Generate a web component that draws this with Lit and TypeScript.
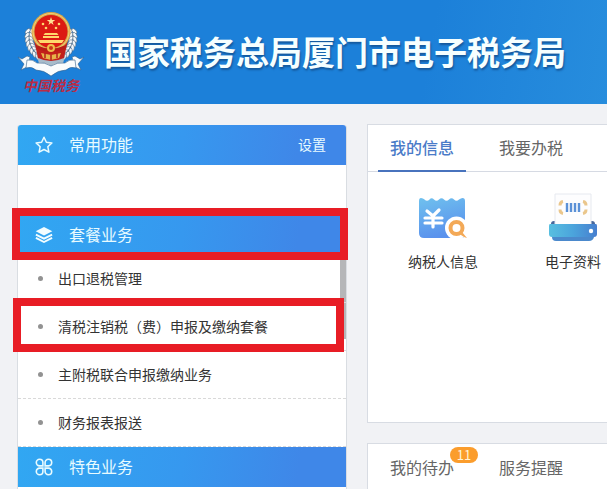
import { LitElement, html, css, svg } from "lit";
import { customElement } from "lit/decorators.js";
import { classMap } from "lit/directives/class-map.js";

const font = css`"Noto Sans CJK SC", "Liberation Sans", sans-serif`;

@customElement("tax-emblem")
class TaxEmblem extends LitElement {
  static styles = css`
    :host { display: flex; flex-direction: column; align-items: center; width: 68px; }
    svg { display: block; width: 68px; height: 67px; }
    .script {
      font: italic bold 14px/16px ${font};
      color: #b92c46;
      white-space: nowrap;
    }
  `;

  private leaves() {
    const out = [];
    for (const side of [-1, 1]) {
      for (let i = 0; i < 9; i++) {
        const t = ((-14 + i * 10) * Math.PI) / 180;
        for (const r of [20, 24]) {
          const x = 34 + side * r * Math.cos(t);
          const y = 27 + r * Math.sin(t);
          const tilt = side * ((t * 180) / Math.PI + (r === 24 ? 62 : 112));
          out.push(svg`<ellipse cx=${x} cy=${y} rx="3.2" ry="1.7" transform="rotate(${tilt} ${x} ${y})" fill="#f4f8fb" stroke="#43586e" stroke-width=".5"/>`);
        }
      }
    }
    return out;
  }

  render() {
    return html`
      <svg viewBox="0 0 68 67" aria-hidden="true">
        ${this.leaves()}
        <path d="M18 39 Q22 50 34 50 Q46 50 50 39 L45 57 L34 62 L23 57Z" fill="#a8bccb"/>
        <path d="M17 30H51L47 48Q34 54 21 48Z" fill="#c3201b"/>
        <circle cx="34" cy="21.500" r="19.500" fill="#d9a648"/>
        <circle cx="34" cy="21.500" r="18" fill="none" stroke="#f3cf78" stroke-width="1"/>
        <circle cx="34" cy="21.500" r="16.500" fill="#dc1a13"/>
        <path d="M34 7l1 3h3.200l-2.600 2 1 3-2.600-1.900-2.600 1.900 1-3-2.600-2h3.200z" fill="#ffe293"/>
        <g fill="#ffd76c">
          <circle cx="26" cy="14" r="1.300"/><circle cx="29" cy="18" r="1.300"/>
          <circle cx="39" cy="18" r="1.300"/><circle cx="42" cy="14" r="1.300"/>
          <path d="M28 23h12l1.500 2h-15zM26 26h16v2h-16zM21 30h26l-2 3h-22z"/>
        </g>
        <path d="M19 35 Q34 42 49 35 L48 39 Q34 45 20 39Z" fill="#b81d18"/>
        <circle cx="34" cy="38" r="4" fill="#eebd4b"/>
        <circle cx="34" cy="38" r="2" fill="#c8371c"/>
        <path d="M24 43 34 45 44 43 42 48 34 50 26 48Z" fill="#e7b54a"/>
        <path d="M28 43v5M34 45v5M40 43v5" stroke="#b52018" stroke-width="1.500"/>
        <path d="M1 47 5 49 10 46 13 47 10 57 4 60 7 54ZM67 47 63 49 58 46 55 47 58 57 64 60 61 54Z" fill="#f8fbfd" stroke="#34608a" stroke-width=".6"/>
        <path d="M10 50 Q16 49 20 53 Q28 52 34 56 Q40 52 48 53 Q52 49 58 50 L59 58 Q53 56 49 60 Q41 60 34 66 Q27 60 19 60 Q15 56 9 58Z" fill="#fafcfd" stroke="#34608a" stroke-width=".6"/>
      </svg>
      <span class="script">中国税务</span>
    `;
  }
}

const starIcon = svg`<path d="M9 1.200 11.400 6.200 16.900 6.900 12.800 10.700 13.900 16.200 9 13.500 4.100 16.200 5.200 10.700 1.100 6.900 6.600 6.200Z" fill="none" stroke="#e8fbff" stroke-width="1.500" stroke-linejoin="round"/>`;

const layersIcon = svg`
  <path d="M9 1 17.300 5.200 9 9.600 .7 5.200Z" fill="#f2fdff"/>
  <path d="M.9 8.600 9 12.700 17.100 8.600M.9 11.800 9 16 17.100 11.800" fill="none" stroke="#f2fdff" stroke-width="1.900"/>`;

const cloverIcon = svg`
  <g fill="none" stroke="#e8fbff" stroke-width="1.600">
    <path d="M7.900 7.900H4.600A3.300 3.300 0 1 1 7.900 4.600ZM10.100 7.900V4.600A3.300 3.300 0 1 1 13.400 7.900ZM7.900 10.100V13.400A3.300 3.300 0 1 1 4.600 10.100ZM10.100 10.100H13.400A3.300 3.300 0 1 1 10.100 13.400Z"/>
  </g>`;

@customElement("side-menu")
class SideMenu extends LitElement {
  static styles = css`
    :host {
      display: block;
      background: #fff;
      border: 1px solid #d9dde2;
      border-top: 0;
      border-radius: 3px 3px 0 0;
    }
    .bar {
      position: relative;
      display: flex;
      align-items: center;
      gap: 16px;
      height: 40px;
      padding: 0 20px 0 17px;
      color: #e8fbff;
      background: linear-gradient(100deg, #31a7f2, #3698ef 50%, #3f87e8 85%);
    }
    .first { border-radius: 3px 3px 0 0; }
    .bar svg { width: 18px; height: 18px; flex: none; }
    h2 { flex: 1; margin: 0; padding-bottom: 2px; font: 16px/24px ${font}; }
    button {
      padding: 0 0 2px;
      border: 0;
      background: none;
      color: inherit;
      font: 14px/24px ${font};
      cursor: pointer;
    }
    .blank { height: 50px; }
    .list { position: relative; }
    ul { margin: 0; padding: 0; list-style: none; }
    li {
      position: relative;
      display: flex;
      align-items: center;
      height: 48px;
      box-sizing: border-box;
      padding-left: 20px;
      border-bottom: 1px dashed #d9d9d9;
    }
    li::before {
      content: "";
      width: 5px;
      height: 5px;
      margin-right: 15px;
      border-radius: 50%;
      background: #929292;
    }
    a { padding-bottom: 2px; color: #333; text-decoration: none; font: 14px/24px ${font}; }
    .thumb {
      position: absolute;
      top: 0;
      right: 0;
      width: 6px;
      height: 84px;
      background: #b5b6b8;
    }
    .marked::after {
      content: "";
      position: absolute;
      z-index: 1;
      border: 8px solid #e81d25;
      pointer-events: none;
    }
    .bar.marked::after { inset: -7px -2px -5px -6px; }
    li.marked::after { inset: -5px 2px -2px -5px; }
  `;

  private items = ["出口退税管理", "清税注销税（费）申报及缴纳套餐", "主附税联合申报缴纳业务", "财务报表报送"];

  render() {
    return html`
      <div class="bar first">
        <svg viewBox="0 0 18 18" aria-hidden="true">${starIcon}</svg>
        <h2>常用功能</h2>
        <button type="button">设置</button>
      </div>
      <div class="blank"></div>
      <div class="bar marked">
        <svg viewBox="0 0 18 18" aria-hidden="true">${layersIcon}</svg>
        <h2>套餐业务</h2>
      </div>
      <div class="list">
        <div class="thumb"></div>
        <ul>
          ${this.items.map((t, i) => html`<li class=${classMap({ marked: i === 1 })}><a href="#">${t}</a></li>`)}
        </ul>
      </div>
      <div class="bar">
        <svg viewBox="0 0 18 18" aria-hidden="true">${cloverIcon}</svg>
        <h2>特色业务</h2>
      </div>
    `;
  }
}

const taxpayerIcon = svg`
  <defs>
    <linearGradient id="bill" x1="0" y1="0" x2=".3" y2="1">
      <stop offset="0" stop-color="#6fc1ee"/><stop offset="1" stop-color="#5a92ed"/>
    </linearGradient>
  </defs>
  <path d="M1 5Q1 2 3 2Q5 2 6.500 3.500Q9 6 11.500 3.500Q13.500 1 16 3.500Q18.500 6 21 3.500Q23.500 1 26 3.500Q28.500 6 31 3.500Q33.500 1 36 3.500Q38.500 6 41 3.500Q43 2 44.500 2Q47 2 47 5V38Q47 42 43 42H6Q1 42 1 37Z" fill="url(#bill)"/>
  <path d="M9 15 15 20 21 14M15 20V31M7 22H24M7 27H24" fill="none" stroke="#fff" stroke-width="3.200" stroke-linecap="round" stroke-linejoin="round"/>
  <circle cx="38.500" cy="32" r="11.500" fill="#fff"/>
  <circle cx="38.500" cy="32" r="6" fill="none" stroke="#f3a957" stroke-width="4"/>
  <path d="M40 37 44 36 49 42 46 41Z" fill="#f3a957"/>`;

const printerIcon = svg`
  <defs>
    <linearGradient id="tray" x1="0" y1="0" x2="1" y2="0">
      <stop offset="0" stop-color="#58bfe0"/><stop offset=".5" stop-color="#4ba4dc"/><stop offset="1" stop-color="#477fcf"/>
    </linearGradient>
  </defs>
  <path d="M2 34V29Q2 26 5 26H43Q46 26 46 29V34Z" fill="#47679b"/>
  <path d="M6 -1H42V30H6Z" fill="#fdfdfe" stroke="#e6e9ef"/>
  <path d="M14 6.500Q11 7 11 10.500M11 14.500Q11 18 14 18.500M34 6.500Q37 7 37 10.500M37 14.500Q37 18 34 18.500" fill="none" stroke="#eac68b" stroke-width="3"/>
  <path d="M18 8V17M22 8V17M26 8V17M30 8V17" stroke="#5b91d7" stroke-width="2.400"/>
  <path d="M1 29H47Q48 29 48 31V39Q48 42 45 42H3Q0 42 0 39V31Q0 29 1 29Z" fill="url(#tray)"/>
  <path d="M3 42H45Q44 46 40 46H7Q3 46 3 42Z" fill="#4b89cc"/>
  <circle cx="42" cy="36" r="2.200" fill="#fff"/>`;

@customElement("app-root")
class AppRoot extends LitElement {
  static styles = css`
    :host {
      display: flex;
      flex-direction: column;
      min-height: 100vh;
      background: #f1f2f5;
      font: 14px/24px ${font};
      color: #333;
    }
    header {
      display: flex;
      align-items: center;
      gap: 19px;
      height: 104px;
      box-sizing: border-box;
      padding: 0 17px 2px;
      background: linear-gradient(100deg, #1c80d9 70%, #278ddd);
      overflow: hidden;
    }
    h1 {
      margin: 0;
      font: bold 33px/48px ${font};
      color: #f6ffff;
      white-space: nowrap;
      text-shadow: 1px 2px 2px #15589c;
    }
    main {
      flex: 1;
      display: grid;
      grid-template-columns: 330px minmax(0, 1fr);
      gap: 20px;
      padding: 20px 0 0 17px;
    }
    side-menu { margin-top: 1px; }
    .right { display: flex; flex-direction: column; gap: 20px; }
    .panel {
      box-sizing: border-box;
      background: #fff;
      border: 1px solid #d8dce3;
      border-right: 0;
      overflow: hidden;
    }
    .info { height: 299px; }
    .todo { flex: 1; border-bottom: 0; }
    .tabs {
      display: flex;
      gap: 21px;
      height: 47px;
      box-sizing: border-box;
      padding-left: 10px;
    }
    .info .tabs { border-bottom: 1px solid #d6dae3; }
    .tab {
      position: relative;
      flex: none;
      padding: 0 12px 2px;
      border: 0;
      background: none;
      color: #666;
      font: 16px/24px ${font};
      cursor: pointer;
    }
    .active {
      color: #4a7bc8;
      font-weight: 500;
    }
    .active::after {
      content: "";
      position: absolute;
      inset: auto 0 -1px;
      height: 2px;
      background: #4873bd;
    }
    .badge {
      position: absolute;
      top: 3px;
      left: 72px;
      width: 28px;
      height: 16px;
      border-radius: 8px;
      background: #fb9d2d;
      color: #fff3d8;
      font: 13px/16px ${font};
      text-align: center;
    }
    .apps { display: flex; padding: 22px 0 0 10px; }
    .app {
      flex: none;
      display: flex;
      flex-direction: column;
      align-items: center;
      gap: 7px;
      width: 130px;
      color: #333;
      text-decoration: none;
    }
    .app svg { width: 50px; height: 48px; overflow: visible; }
  `;

  render() {
    return html`
      <header>
        <tax-emblem></tax-emblem>
        <h1>国家税务总局厦门市电子税务局</h1>
      </header>
      <main>
        <side-menu></side-menu>
        <div class="right">
          <section class="panel info">
            <div class="tabs">
              <button type="button" class="tab active">我的信息</button>
              <button type="button" class="tab">我要办税</button>
            </div>
            <div class="apps">
              <a class="app" href="#"><svg viewBox="0 -2 50 48" aria-hidden="true">${taxpayerIcon}</svg>纳税人信息</a>
              <a class="app" href="#"><svg viewBox="-1 -1 50 48" aria-hidden="true">${printerIcon}</svg>电子资料</a>
            </div>
          </section>
          <section class="panel todo">
            <div class="tabs">
              <button type="button" class="tab">我的待办<span class="badge">11</span></button>
              <button type="button" class="tab">服务提醒</button>
            </div>
          </section>
        </div>
      </main>
    `;
  }
}
